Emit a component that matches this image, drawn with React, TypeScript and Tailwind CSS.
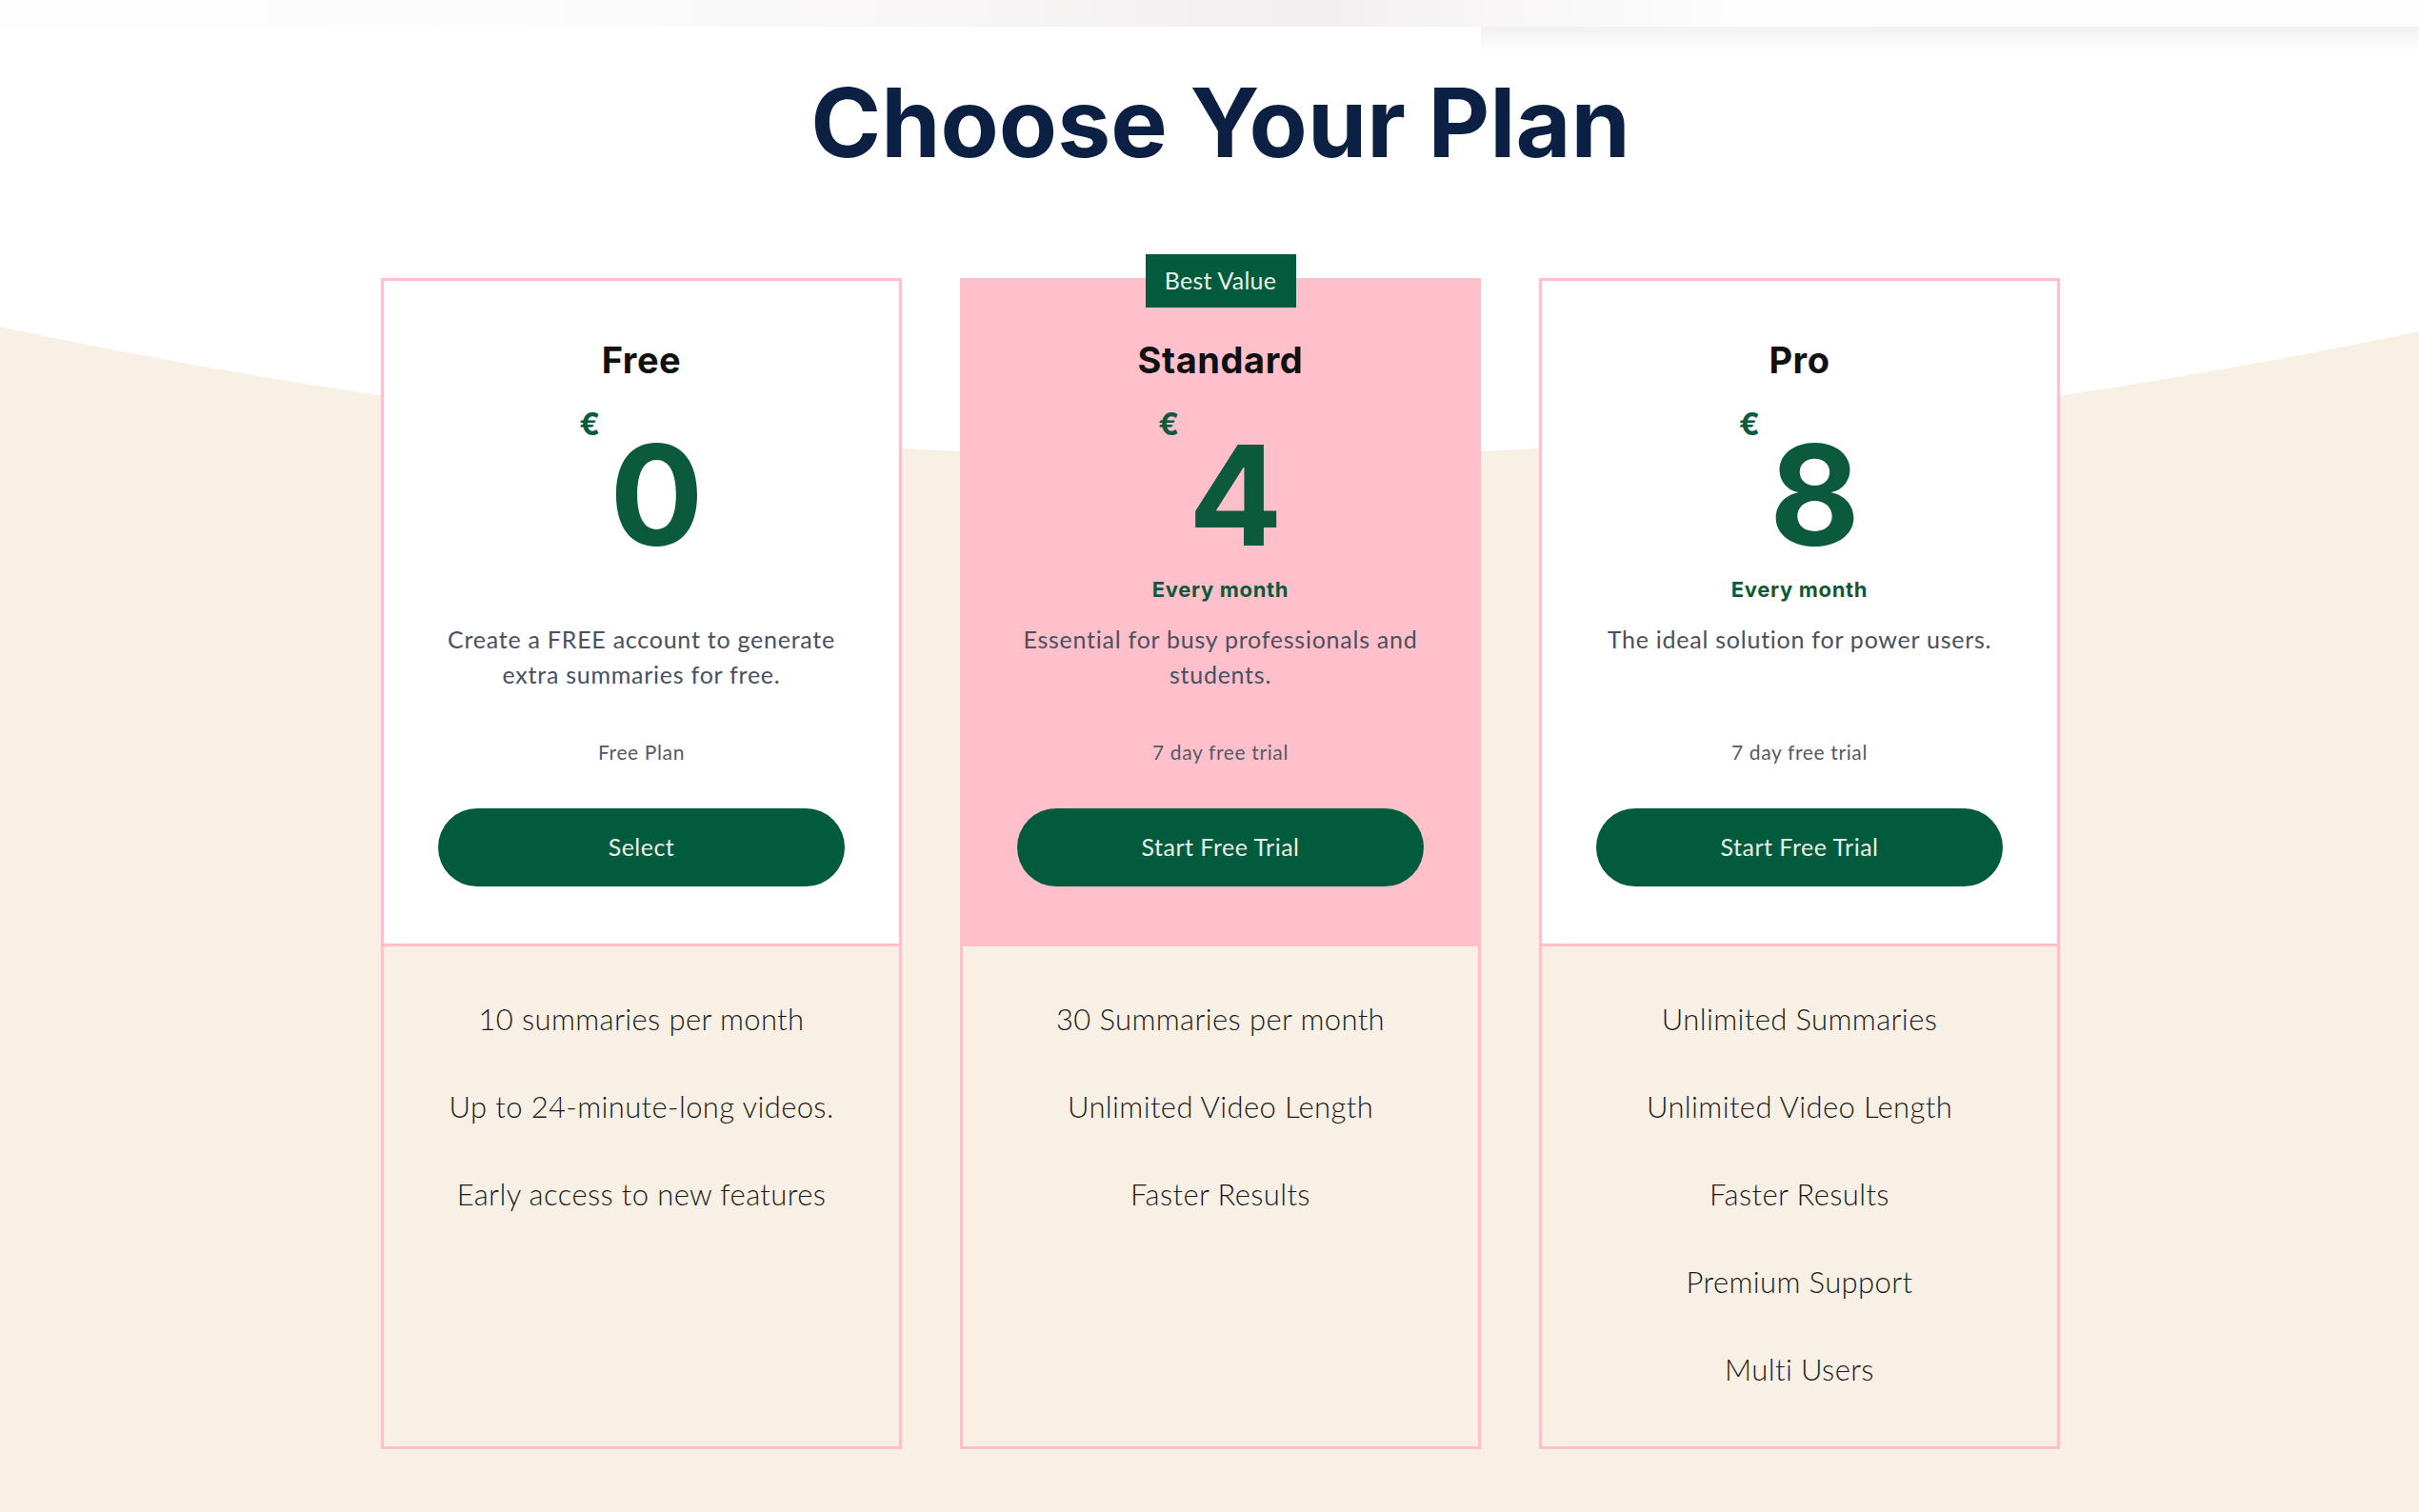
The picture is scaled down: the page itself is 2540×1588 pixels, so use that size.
import React from "react";

type Plan = {
  name: string;
  price: string;
  period?: string;
  desc: string[];
  note: string;
  cta: string;
  features: string[];
  highlight?: boolean;
};

const plans: Plan[] = [
  {
    name: "Free",
    price: "0",
    desc: ["Create a FREE account to generate", "extra summaries for free."],
    note: "Free Plan",
    cta: "Select",
    features: ["10 summaries per month", "Up to 24-minute-long videos.", "Early access to new features"],
  },
  {
    name: "Standard",
    price: "4",
    period: "Every month",
    desc: ["Essential for busy professionals and", "students."],
    note: "7 day free trial",
    cta: "Start Free Trial",
    features: ["30 Summaries per month", "Unlimited Video Length", "Faster Results"],
    highlight: true,
  },
  {
    name: "Pro",
    price: "8",
    period: "Every month",
    desc: ["The ideal solution for power users."],
    note: "7 day free trial",
    cta: "Start Free Trial",
    features: [
      "Unlimited Summaries",
      "Unlimited Video Length",
      "Faster Results",
      "Premium Support",
      "Multi Users",
    ],
  },
];

function PlanCard({ plan }: { plan: Plan }) {
  return (
    <div className="relative flex h-[1230px] w-[547px] flex-col border-[3px] border-[#ffc0cb] bg-[#f9f0e5]">
      {plan.highlight && (
        <div className="absolute left-1/2 top-[-28px] z-10 flex h-[56px] w-[158px] -translate-x-1/2 items-center justify-center bg-[#035b3e] font-[Lato,sans-serif] text-[25px] tracking-[0.01em] text-[#e8f0eb]">
          Best Value
        </div>
      )}

      {/* top block */}
      <div
        className={`flex h-[699px] flex-col items-center border-b-[3px] border-[#ffc0cb] pt-[64px] ${
          plan.highlight ? "bg-[#ffc0cb]" : "bg-white"
        }`}
      >
        <h3 className="font-[Inter,sans-serif] text-[38px] font-bold leading-none tracking-[0.015em] text-[#111111]">
          {plan.name}
        </h3>

        <div className="mt-[50px] flex h-[146px] items-start justify-center font-[Inter,sans-serif] font-bold text-[#0b5a3d]">
          <span className="mr-[10px] mt-[-17px] text-[32px] leading-none">€</span>
          <span className="text-[146px] leading-none">{plan.price}</span>
        </div>

        <div className="mt-[14px] h-[24px] font-[Inter,sans-serif] text-[22px] font-bold leading-[24px] tracking-[0.03em] text-[#0b5a3d]">
          {plan.period ?? ""}
        </div>

        <div className="mt-[22px] h-[74px] text-center font-[Lato,sans-serif] text-[25px] leading-[37px] tracking-[0.03em] text-[#4a5060]">
          {plan.desc.map((line) => (
            <div key={line}>{line}</div>
          ))}
        </div>

        <div className="mt-[51px] font-[Lato,sans-serif] text-[21px] leading-[24px] tracking-[0.03em] text-[#555a64]">
          {plan.note}
        </div>

        <button className="mt-[47px] flex h-[82px] w-[427px] items-center justify-center rounded-full bg-[#035b3e] font-[Lato,sans-serif] text-[25px] tracking-[0.02em] text-[#e8f0eb]">
          {plan.cta}
        </button>
      </div>

      {/* features */}
      <ul className="flex flex-col items-center gap-[60px] pt-[60px] font-[Lato,sans-serif] text-[31px] font-light leading-[32px] tracking-[0.012em] text-[#1c1b1a]">
        {plan.features.map((f) => (
          <li key={f}>{f}</li>
        ))}
      </ul>
    </div>
  );
}

export default function App() {
  return (
    <div className="relative min-h-[1588px] w-full overflow-hidden bg-white">
      {/* beige bowl behind the cards */}
      <svg
        className="absolute inset-0 h-full w-full"
        viewBox="0 0 2540 1588"
        preserveAspectRatio="none"
      >
        <path d="M0 343 Q1270 615 2540 348 L2540 1588 L0 1588 Z" fill="#f9f0e5" />
      </svg>

      <div className="relative flex flex-col">
        {/* blurred header remains */}
        <div className="h-[28px] bg-[linear-gradient(to_right,#fdfdfd_0%,#fcfcfc_22%,#f8f6f6_38%,#f4f0f1_50%,#f3eff0_55%,#f8f6f7_62%,#fdfdfd_72%,#fefefe_100%)]" />
        <div className="flex h-[26px]">
          <div className="w-[1555px]" />
          <div className="flex-1 bg-[linear-gradient(to_bottom,#f1f1f1,#ffffff)]" />
        </div>

        <div className="flex flex-col items-center pl-[23px]">
          <h1 className="mt-[25px] font-[Inter,sans-serif] text-[100px] font-bold leading-none text-[#0b2042]">
            Choose Your Plan
          </h1>

          <div className="mt-[113px] flex gap-[61px]">
            {plans.map((p) => (
              <PlanCard key={p.name} plan={p} />
            ))}
          </div>
        </div>
      </div>
    </div>
  );
}
